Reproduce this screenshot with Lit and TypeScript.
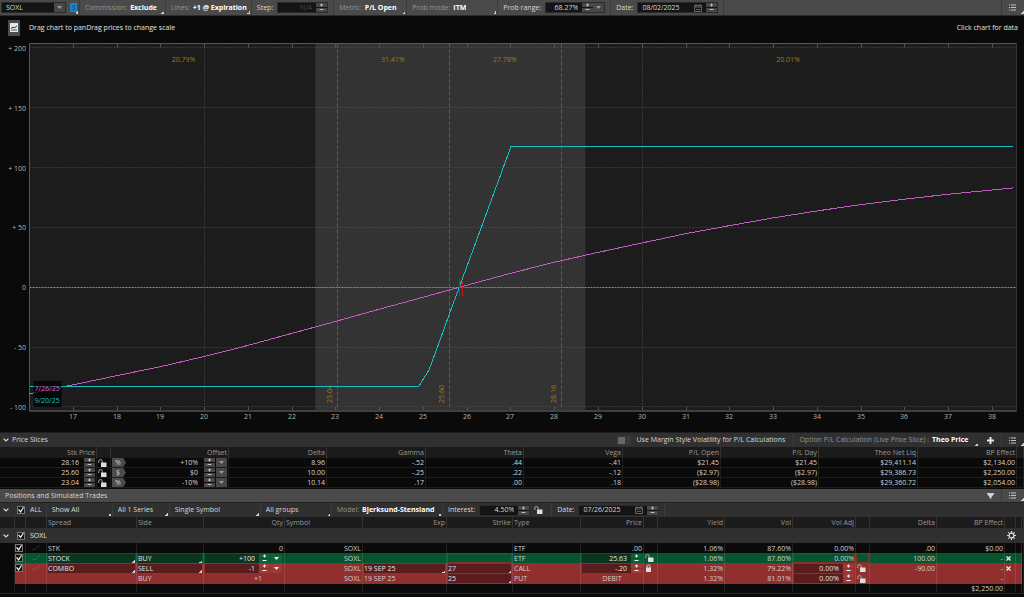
import { LitElement, html, svg, css, nothing } from "lit";
import { customElement, state } from "lit/decorators.js";

/* ---------- shared look ---------- */

const controls = css`
  *,
  *::before,
  *::after {
    box-sizing: border-box;
  }
  button,
  input,
  select {
    font: inherit;
    color: inherit;
    margin: 0;
    padding: 0;
    border: 0;
    border-radius: 0;
    background: none;
    min-width: 0;
    appearance: none;
    outline-offset: -1px;
  }
  button {
    display: flex;
    align-items: center;
    justify-content: center;
  }
  svg {
    display: block;
    flex: none;
  }
  .value {
    font-weight: 700;
    color: #fff;
  }
  .num {
    text-align: right;
  }
  .check {
    display: block;
    width: 8px;
    height: 8px;
    flex: none;
    border: 1px solid #777;
    background: #111;
  }
  .check:checked::before {
    content: "";
    display: block;
    width: 6px;
    height: 6px;
    background: #f0f0f0;
    clip-path: polygon(0 45%, 18% 35%, 42% 62%, 85% 0, 100% 8%, 45% 100%);
  }
  .stepper {
    display: flex;
    flex-direction: column;
    gap: 1px;
    width: 11px;
    flex: none;
  }
  .stepper button {
    height: 4px;
    background: #474747;
    color: #bdbdbd;
  }
  .drop {
    width: 11px;
    height: 9px;
    flex: none;
    background: #474747;
    color: #999;
  }
`;

const plus = svg`<svg width="5" height="4" viewBox="0 0 5 4"><path d="M1 2h3M2.500 0.500v3" stroke="currentColor" fill="none"/></svg>`;
const minus = svg`<svg width="5" height="4" viewBox="0 0 5 4"><path d="M0.500 1.500h4" stroke="currentColor" fill="none"/></svg>`;
const caret = svg`<svg width="5" height="3" viewBox="0 0 5 3"><path d="M0 0h5L2.500 3z" fill="currentColor"/></svg>`;
const chevron = svg`<svg width="6" height="4" viewBox="0 0 6 4"><path d="M.6.6 3 3 5.400.6" stroke="currentColor" stroke-width="1.200" fill="none"/></svg>`;
const openLock = svg`<svg width="9" height="8" viewBox="0 0 9 8"><path d="M.8 4V2.200a1.700 1.700 0 0 1 3.400 0V4" stroke="#aaa" stroke-width="1" fill="none"/><path d="M3 3.500h5.500V8H3z" fill="#ddd"/></svg>`;
const shutLock = svg`<svg width="7" height="8" viewBox="0 0 7 8"><path d="M2 4V2.300a1.500 1.500 0 0 1 3 0V4" stroke="#ddd" stroke-width="1" fill="none"/><path d="M1 3.500h5V8H1z" fill="#ddd"/></svg>`;
const listIcon = svg`<svg width="7" height="7" viewBox="0 0 7 7"><path d="M0 1h1.200M0 3.500h1.200M0 6h1.200M2 1h5M2 3.500h5M2 6h5" stroke="#c4c4c4" stroke-width="1.100"/></svg>`;
const calendar = svg`<svg width="8" height="8" viewBox="0 0 8 8"><path d="M.5 1.500h7v6h-7zM.5 3h7" stroke="#666" fill="none"/><path d="M2 0v2M6 0v2M2 5.500h4" stroke="#666"/></svg>`;
const gear = svg`<svg width="9" height="9" viewBox="0 0 9 9"><circle cx="4.500" cy="4.500" r="2.400" stroke="#ddd" stroke-width="1.200" fill="none"/><path d="M4.500 0v2M4.500 7v2M0 4.500h2M7 4.500h2M1.300 1.300l1.400 1.400M6.300 6.300l1.400 1.400M7.700 1.300 6.300 2.700M2.700 6.300 1.300 7.700" stroke="#ddd" stroke-width="1.100"/></svg>`;
const cross = svg`<svg width="5" height="5" viewBox="0 0 5 5"><path d="M.5.5l4 4M4.500.5l-4 4" stroke="#eee" stroke-width="1.200"/></svg>`;
const funnel = svg`<svg width="7" height="6" viewBox="0 0 7 6"><path d="M0 0h7v1L4.500 4v1.500h-2V4L0 1z" fill="#d0d0d0"/></svg>`;
const trend = svg`<svg width="8" height="6" viewBox="0 0 8 6"><path d="M0 5l2-1 1 1 2-3 1 0L8 0" stroke="#fff" stroke-opacity=".13" fill="none"/></svg>`;

const stepper = (name: string) => html`<span class="stepper"
  ><button aria-label="Increase ${name}">${plus}</button
  ><button aria-label="Decrease ${name}">${minus}</button></span
>`;

/* ---------- profit and loss chart ---------- */

type Point = [number, number];

const X_MIN = 16;
const X_MAX = 38.55;
const Y_MAX = 203.6;
const Y_MIN = -103.4;

const expiration: Point[] = [
  [16, -82.5], [24.9, -82.5], [25.13, -69], [25.33, -49], [25.6, -21.5],
  [25.82, 0], [27, 117.5], [38.48, 117.5],
];
const today: Point[] = [
  [16, -89], [16.5, -85], [17, -81.5], [18, -73.8], [19, -66.3], [20, -57.8],
  [21, -48.5], [22, -38.5], [23, -28.5], [24, -18.3], [25, -8.3], [25.8, -0.2],
  [26.5, 6.7], [27, 11.7], [28, 21], [29, 29.2], [30, 37], [31, 44.8], [32, 51.5],
  [33, 58], [34, 63.8], [35, 69], [36, 73.6], [37, 77.7], [38, 81.2], [38.48, 83],
];
const slices = [23.04, 25.6, 28.16];
const probabilities: [number, string][] = [
  [19.52, "20.79%"], [24.3, "31.41%"], [26.86, "27.78%"], [33.33, "20.01%"],
];

@customElement("pl-chart")
export class PlChart extends LitElement {
  @state() private w = 1024;
  @state() private h = 382;
  private watcher?: ResizeObserver;

  static styles = css`
    :host {
      display: flex;
      flex: 1;
      min-height: 260px;
      overflow: hidden;
    }
    svg {
      flex: 1;
      width: 100%;
      height: auto;
      min-width: 0;
      font-size: 7px;
    }
    .plot { fill: #1c1c1c; }
    .range { fill: #333; }
    .frame { stroke: #555; fill: none; }
    .base { stroke: #404040; stroke-width: 2; }
    .side { stroke: #333; }
    .grid { stroke: #505050; stroke-dasharray: 1 2; }
    .zero { stroke: #8a8a8a; stroke-dasharray: 2 1; }
    .slice { stroke: #7c5a14; stroke-dasharray: 4 2; }
    .amber { fill: #a87810; }
    .tick { fill: #b4b4b4; }
    .teal { stroke: #14c0c0; fill: none; shape-rendering: crispEdges; }
    .pink { stroke: #c45cc4; fill: none; shape-rendering: crispEdges; }
    .mark { stroke: #c01c1c; stroke-width: 1; }
    .box { fill: #000; fill-opacity: 0.75; }
    .pink-text { fill: #d466d4; }
    .teal-text { fill: #10c4bc; }
    .mid { text-anchor: middle; }
    .end { text-anchor: end; }
  `;

  connectedCallback() {
    super.connectedCallback();
    this.watcher = new ResizeObserver(([entry]) => {
      this.w = Math.round(entry.contentRect.width);
      this.h = Math.round(entry.contentRect.height);
    });
    this.watcher.observe(this);
  }

  disconnectedCallback() {
    this.watcher?.disconnect();
    super.disconnectedCallback();
  }

  render() {
    const left = 29.5;
    const right = this.w - 7.5;
    const top = 0.5;
    const bottom = this.h - 14;
    const x = (v: number) => left + ((v - X_MIN) / (X_MAX - X_MIN)) * (right - left);
    const y = (v: number) => top + ((Y_MAX - v) / (Y_MAX - Y_MIN)) * (bottom - top);
    const snap = (n: number) => Math.floor(n) + 0.5;
    const path = (pts: Point[]) => pts.map(([a, b]) => `${x(a).toFixed(1)},${y(b).toFixed(1)}`).join(" ");
    const prices = Array.from({ length: 22 }, (_, i) => i + 17);
    const levels = [200, 150, 100, 50, 0, -50, -100];
    const level = (v: number) => (v > 0 ? `+ ${v}` : v < 0 ? `- ${-v}` : "0");
    const foot = Math.round(y(-82.5));

    return html`<svg role="img" aria-label="Profit and loss by price">
      <rect class="plot" x=${left} y=${top} width=${right - left} height=${bottom - top}></rect>
      <rect class="range" x=${x(22.53)} y=${top} width=${x(28.7) - x(22.53)} height=${bottom - top}></rect>
      ${levels.map((v) => svg`
        <line class=${v === 0 ? "zero" : "grid"} x1=${left} x2=${right} y1=${snap(y(v))} y2=${snap(y(v))} />
        <text class="tick end" x="26" y=${Math.round(y(v)) + 3}>${level(v)}</text>`)}
      ${[20, 30].map((v) => svg`<line class="grid" x1=${snap(x(v))} x2=${snap(x(v))} y1=${top} y2=${bottom} />`)}
      ${prices.map((v) => svg`
        <path class="frame" d=${`M${snap(x(v))} ${top}v4M${snap(x(v))} ${bottom}v-4`} />
        <text class="tick mid" x=${Math.floor(x(v))} y=${bottom + 8}>${v}</text>`)}
      ${slices.map((v) => svg`
        <line class="slice" x1=${snap(x(v))} x2=${snap(x(v))} y1=${top} y2=${bottom} />
        <text class="amber mid" transform=${`translate(${snap(x(v)) - 6} ${foot + 8}) rotate(-90)`}>${v.toFixed(2)}</text>`)}
      ${probabilities.map(([v, label]) => svg`<text class="amber mid" x=${x(v)} y="19">${label}</text>`)}
      <path class="frame" d=${`M${left} ${bottom}V${top}H${right}`}></path>
      <line class="side" x1=${right} x2=${right} y1=${top} y2=${bottom}></line>
      <line class="base" x1=${left} x2=${right} y1=${bottom} y2=${bottom}></line>
      <polyline class="pink" points=${path(today)}></polyline>
      <polyline class="teal" points=${path(expiration)}></polyline>
      <path class="mark" d=${`M${snap(x(25.83))} ${y(7)}v17M${snap(x(25.89))} ${y(5)}v15`}></path>
      <rect class="box" x=${left + 4} y=${foot - 5} width="28" height="26"></rect>
      <text class="pink-text" x=${left + 5} y=${foot + 5}>7/26/25</text>
      <text class="teal-text" x=${left + 5} y=${foot + 17}>9/20/25</text>
    </svg>`;
  }
}

/* ---------- price slices ---------- */

const sliceColumns: [string, number][] = [
  ["Stk Price", 97], ["", 14], ["Offset", 118], ["Delta", 98], ["Gamma", 99], ["Theta", 98],
  ["Vega", 99], ["P/L Open", 98], ["P/L Day", 98], ["Theo Net Liq", 99], ["BP Effect", 99], ["", 7],
];
const sliceRows = [
  { price: "28.16", unit: "%", offset: "+10%", cells: ["8.96", "-.52", ".44", "-.41", "$21.45", "$21.45", "$29,411.14", "$2,134.00"] },
  { price: "25.60", unit: "$", offset: "$0", cells: ["10.00", "-.25", ".22", "-.12", "($2.97)", "($2.97)", "$29,386.73", "$2,250.00"] },
  { price: "23.04", unit: "%", offset: "-10%", cells: ["10.14", ".17", ".00", ".18", "($28.98)", "($28.98)", "$29,360.72", "$2,054.00"] },
];

const tables = css`
  table {
    width: 100%;
    table-layout: fixed;
    border-collapse: separate;
    border-spacing: 0;
  }
  th,
  td {
    padding: 0 1px 0 1px;
    border-right: 1px solid #1e1e1e;
    font-weight: 400;
    line-height: 9px;
    height: 10px;
    white-space: nowrap;
    overflow: hidden;
    text-align: left;
  }
  th {
    height: 11px;
    background: #1b1b1b;
    color: #989898;
    border-right-color: #333;
  }
  .r {
    text-align: right;
  }
  .c {
    text-align: center;
  }
  .line {
    display: flex;
    align-items: center;
    justify-content: flex-end;
    height: 9px;
  }
`;

@customElement("price-slices")
export class PriceSlices extends LitElement {
  static styles = [
    controls,
    tables,
    css`
      :host {
        display: block;
        padding-bottom: 1px;
      }
      td {
        color: #d4d4d4;
        border-bottom: 1px solid #1c1c1c;
      }
      .price {
        width: 40px;
        margin-right: 5px;
      }
      .tag {
        width: 14px;
        height: 9px;
        background: #4c4c4c;
        color: #d0d0d0;
        line-height: 9px;
        clip-path: polygon(0 0, 80% 0, 100% 50%, 80% 100%, 0 100%);
        padding-right: 2px;
      }
      .offset {
        flex: 1;
        margin-right: 6px;
      }
      .drop {
        margin-left: 1px;
      }
    `,
  ];

  render() {
    return html`<table>
      <colgroup>${sliceColumns.map(([, w]) => html`<col style="width:${w}px" />`)}</colgroup>
      <thead><tr>${sliceColumns.map(([t]) => html`<th class="r">${t}</th>`)}</tr></thead>
      <tbody>
        ${sliceRows.map((row) => html`<tr>
          <td><div class="line"><input class="num price" aria-label="Stock price" .value=${row.price} />${stepper("price")}</div></td>
          <td><button aria-label="Lock price">${openLock}</button></td>
          <td><div class="line"><button class="tag" aria-label="Offset unit">${row.unit}</button
            ><input class="num offset" aria-label="Offset" .value=${row.offset} />${stepper("offset")}<button class="drop" aria-label="Offset choices">${caret}</button></div></td>
          ${row.cells.map((c) => html`<td class="r">${c}</td>`)}
          <td></td>
        </tr>`)}
      </tbody>
    </table>`;
  }
}

/* ---------- positions ---------- */

const positionColumns: [string, number, string][] = [
  ["", 15, ""], ["", 11, ""], ["", 21, ""], ["Spread", 90, ""], ["Side", 67, ""], ["Qty", 81, "r"],
  ["Symbol", 78, ""], ["Exp", 84, "r"], ["Strike", 66, "r"], ["Type", 68, ""], ["Price", 63, "r"],
  ["", 14, ""], ["Yield", 67, "r"], ["Vol", 68, "r"], ["Vol Adj", 63, "r"], ["", 14, ""],
  ["Delta", 67, "r"], ["BP Effect", 68, "r"], ["", 11, ""], ["", 6, ""], ["", 2, ""],
];

@customElement("positions-table")
export class PositionsTable extends LitElement {
  static styles = [
    controls,
    tables,
    css`
      :host {
        display: block;
        padding-bottom: 3px;
      }
      td {
        color: #d0d0d0;
        border-right-color: rgba(255, 255, 255, 0.1);
      }
      td:first-child,
      td:last-child {
        background: #0a0a0a;
        border-right-color: #1e1e1e;
      }
      .group td {
        height: 15px;
        background: #303030;
        border: 0;
        padding: 0;
        overflow: visible;
        color: #e0e0e0;
      }
      .group .bar {
        display: flex;
        align-items: center;
        padding: 0 8px 0 3px;
        height: 15px;
      }
      .toggle {
        width: 6px;
        margin-right: 8px;
      }
      .name {
        display: flex;
        align-items: center;
        gap: 5px;
        flex: 1;
      }
      .pick {
        padding: 0;
      }
      .buy td {
        background: #07552f;
      }
      .sell td {
        background: #912e2e;
      }
      .buy td:first-child,
      .buy td:last-child,
      .sell td:first-child,
      .sell td:last-child {
        background: #0a0a0a;
      }
      .leg td {
        height: 11px;
      }
      .total td {
        border-bottom: 1px solid #2a2a2a;
      }
      .buy .field {
        background-color: #0b3520;
      }
      .sell .field {
        background-color: #5a1c1c;
      }
      .field {
        display: block;
        width: 100%;
        height: 9px;
        line-height: 9px;
        color: #e4e4e4;
      }
      select.field {
        background-image: linear-gradient(135deg, transparent 50%, #ccc 50%);
        background-size: 3px 3px;
        background-position: right bottom;
        background-repeat: no-repeat;
      }
      .outlined {
        box-shadow: inset 0 0 0 1px #7a3327;
      }
      .line .field {
        flex: 1;
        padding-right: 4px;
      }
      .buy .stepper button,
      .buy .drop {
        background: #0c6338;
        color: #f0f0f0;
      }
      .sell .stepper button,
      .sell .drop {
        background: #a03a3a;
        color: #f0f0f0;
      }
      .line .drop {
        margin: 0 1px;
      }
      .center {
        justify-content: center;
      }
      .off {
        padding-right: 22px;
      }
    `,
  ];

  private pick(name: string, value: string) {
    return html`<select class="field" aria-label=${name}><option>${value}</option></select>`;
  }

  private number(name: string, value: string, drop = false) {
    return html`<div class="line">
      <input class="field num" aria-label=${name} .value=${value} />${stepper(name)}
      ${drop ? html`<button class="drop" aria-label="${name} choices">${caret}</button>` : nothing}
    </div>`;
  }

  private lead(name: string) {
    return html`<td></td>
      <td class="pick"><input class="check" type="checkbox" aria-label=${name} checked /></td>
      <td><div class="line center">${trend}</div></td>`;
  }

  render() {
    const close = html`<td><button aria-label="Remove">${cross}</button></td>`;
    const blank = html`<td></td>`;
    return html`<table>
      <colgroup>${positionColumns.map(([, w]) => html`<col style="width:${w}px" />`)}</colgroup>
      <thead><tr>${positionColumns.map(([t, , a]) => html`<th class=${a}>${t}</th>`)}</tr></thead>
      <tbody>
        <tr class="group"><td colspan="21"><div class="bar">
          <button class="toggle" aria-label="Collapse SOXL">${chevron}</button>
          <label class="name"><input class="check" type="checkbox" checked />SOXL</label>
          <button aria-label="Group settings">${gear}</button>
        </div></td></tr>
        <tr>
          ${this.lead("Include STK")}
          <td>STK</td>${blank}<td class="r">0</td><td class="r">SOXL</td>${blank}${blank}<td>ETF</td><td class="r">.00</td>${blank}
          <td class="r">1.06%</td><td class="r">87.60%</td><td class="r">0.00%</td>${blank}<td class="r">.00</td><td class="r">$0.00</td>${blank}${blank}${blank}
        </tr>
        <tr class="buy">
          ${this.lead("Include STOCK")}
          <td>${this.pick("Spread", "STOCK")}</td><td>${this.pick("Side", "BUY")}</td>
          <td>${this.number("quantity", "+100", true)}</td><td class="r">SOXL</td>${blank}
          <td class="outlined"></td><td>ETF</td><td>${this.number("price", "25.63")}</td>
          <td><button aria-label="Lock price">${openLock}</button></td>
          <td class="r">1.06%</td><td class="r">87.60%</td><td class="r outlined">0.00%</td><td class="outlined"></td>
          <td class="r">100.00</td><td class="r">-</td>${close}${blank}${blank}
        </tr>
        <tr class="sell">
          ${this.lead("Include COMBO")}
          <td>${this.pick("Spread", "COMBO")}</td><td>${this.pick("Side", "SELL")}</td>
          <td>${this.number("quantity", "-1", true)}</td><td class="r">SOXL</td><td>${this.pick("Expiration", "19 SEP 25")}</td>
          <td>${this.pick("Strike", "27")}</td><td>CALL</td><td>${this.number("price", "-.20")}</td>
          <td><button aria-label="Unlock price">${shutLock}</button></td>
          <td class="r">1.32%</td><td class="r">79.22%</td><td>${this.number("volatility", "0.00%")}</td>
          <td><button aria-label="Lock volatility">${openLock}</button></td>
          <td class="r">-90.00</td><td class="r">-</td>${close}${blank}${blank}
        </tr>
        <tr class="sell leg">
          <td></td>${blank}${blank}${blank}<td>BUY</td><td class="r off">+1</td><td class="r">SOXL</td><td>19 SEP 25</td>
          <td>${this.pick("Strike", "25")}</td><td>PUT</td><td class="c">DEBIT</td>${blank}
          <td class="r">1.32%</td><td class="r">81.01%</td><td>${this.number("volatility", "0.00%")}</td>
          <td><button aria-label="Lock volatility">${openLock}</button></td>
          ${blank}<td class="r">-</td>${blank}${blank}${blank}
        </tr>
        <tr class="total">
          ${Array.from({ length: 17 }, () => html`<td></td>`)}<td class="r">$2,250.00</td>${blank}${blank}${blank}
        </tr>
      </tbody>
    </table>`;
  }
}

/* ---------- page ---------- */

@customElement("app-root")
export class AppRoot extends LitElement {
  static styles = [
    controls,
    css`
      :host {
        display: flex;
        flex-direction: column;
        min-height: 100vh;
        background: #0a0a0a;
        color: #d8d8d8;
        font-family: "Open Sans", "Noto Sans", sans-serif;
        font-size: 7px;
        line-height: 10px;
      }
      .bar {
        display: flex;
        align-items: center;
        height: 14px;
        background: #303030;
        flex: none;
      }
      .tools {
        height: 16px;
        background: #4a4a4a;
        border-bottom: 1px solid #2c2c2c;
      }
      .title {
        background: #4a4a4a;
        border-bottom: 1px solid #222;
      }
      .cell {
        display: flex;
        align-items: center;
        align-self: stretch;
        gap: 4px;
        padding: 0 5px;
        border-right: 1px solid #3b3b3b;
        white-space: nowrap;
      }
      .menu {
        gap: 3px;
        padding-right: 7px;
        background: linear-gradient(135deg, transparent 50%, #ccc 50%) no-repeat right 1px bottom 1px / 3px 3px;
      }
      .symbol {
        padding: 0 4px 0 1px;
      }
      .group {
        padding: 0 2px 0 0;
      }
      .tight {
        padding-right: 4px;
      }
      .bare {
        border: 0;
      }
      .calc {
        border: 0;
        padding-right: 10px;
      }
      .dim {
        color: #949494;
      }
      .box {
        display: flex;
        align-items: center;
        height: 11px;
        background: #141414;
        border: 1px solid #2a2a2a;
      }
      .box input {
        width: 38px;
        padding: 0 4px;
      }
      .box .ticker {
        width: 52px;
      }
      .box .range {
        width: 36px;
      }
      .box .date {
        width: 56px;
      }
      .box svg {
        margin-right: 4px;
      }
      .box button svg {
        margin: 0;
      }
      .off {
        color: #484848;
      }
      .fill {
        flex: 1;
      }
      .link {
        width: 7px;
        height: 9px;
        background: #1a86c0;
        color: #0c3e60;
        line-height: 9px;
      }
      .corner {
        align-self: stretch;
        width: 23px;
        padding-right: 1px;
        border-left: 1px solid #3b3b3b;
        background: linear-gradient(135deg, transparent 50%, #ccc 50%) no-repeat right bottom 1px / 3px 3px;
      }
      .square {
        width: 22px;
      }
      .hint {
        display: flex;
        align-items: center;
        justify-content: space-between;
        padding: 0 6px 4px 8px;
        height: 27px;
        color: #e4e4e4;
      }
      .hint div {
        display: flex;
        align-items: center;
        gap: 9px;
      }
      .gap {
        height: 8px;
        border-bottom: 1px solid #1e1e1e;
        flex: none;
      }
      .w66 {
        min-width: 66px;
      }
      .w57 {
        min-width: 57px;
      }
      .w73 {
        min-width: 73px;
      }
      .w86 {
        min-width: 86px;
      }
      .w91 {
        min-width: 91px;
      }
      .w71 {
        min-width: 71px;
      }
      .all {
        display: flex;
        align-items: center;
        gap: 5px;
      }
      .first {
        padding: 0 4px 0 3px;
        gap: 8px;
      }
      .rate {
        padding-right: 8px;
      }
      .heading {
        padding-left: 3px;
        gap: 3px;
      }
      .switch {
        width: 14px;
        height: 9px;
        background: #3a3a3a;
      }
      .switch::before {
        content: "";
        display: block;
        width: 7px;
        height: 7px;
        margin: 1px;
        background: #666;
      }
      .tick {
        gap: 6px;
        padding-right: 8px;
      }
    `,
  ];

  private menu(label: string, value: string, extra = "") {
    return html`<label class="cell menu ${extra}">
      ${label ? html`<span class="dim">${label}</span>` : nothing}
      <select class=${label ? "value" : ""} aria-label=${label || value}><option>${value}</option></select>
    </label>`;
  }

  render() {
    return html`
      <div class="bar tools">
        <div class="cell bare symbol">
          <div class="box"><input class="ticker" aria-label="Symbol" .value=${"SOXL"} /><button class="drop" aria-label="Symbol choices">${caret}</button></div>
        </div>
        <div class="cell menu group"><button class="link" aria-label="Link group">3</button></div>
        ${this.menu("Commission:", "Exclude", "w86")} ${this.menu("Lines:", "+1 @ Expiration", "tight")}
        <div class="cell"><label for="step">Step:</label>
          <div class="box"><input id="step" class="num off" .value=${"N/A"} />${stepper("step")}</div></div>
        ${this.menu("Metric:", "P/L Open", "w73")} ${this.menu("Prob mode:", "ITM", "w91")}
        <div class="cell"><label for="range">Prob range:</label>
          <div class="box"><input id="range" class="num range" .value=${"68.27%"} />${stepper("range")}<button class="drop" aria-label="Range choices">${caret}</button></div></div>
        <div class="cell"><label for="date">Date:</label>
          <div class="box"><input id="date" class="date" .value=${"08/02/2025"} />${calendar}${stepper("date")}</div></div>
        <span class="fill"></span>
        <button class="corner" aria-label="Chart menu">${listIcon}</button>
      </div>

      <div class="hint">
        <div>
          <svg width="12" height="16" viewBox="0 0 12 16"><path d="M0 0h12v16H0z" fill="#4c4c4c"/><path d="M2 3h8v9H2z" fill="#e8e8e8"/><path d="M3 8.500 5 7l1 1 3-2" stroke="#333" fill="none"/><path d="M3 10h6" stroke="#555"/></svg>
          <span>Drag chart to panDrag prices to change scale</span>
        </div>
        <span>Click chart for data</span>
      </div>

      <pl-chart></pl-chart>
      <div class="gap"></div>

      <div class="bar">
        <div class="cell bare heading"><button aria-label="Collapse price slices">${chevron}</button><span>Price Slices</span></div>
        <span class="fill"></span>
        <label class="cell tick"><input class="switch" type="checkbox" />Use Margin Style Volatility for P/L Calculations</label>
        ${this.menu("Option P/L Calculation (Live Price Slice) :", "Theo Price", "calc")}
        <button class="square" aria-label="Add slice"><svg width="7" height="7" viewBox="0 0 7 7"><path d="M3.500 0v7M0 3.500h7" stroke="#e4e4e4" stroke-width="2"/></svg></button>
        <button class="corner" aria-label="Slices menu">${listIcon}</button>
      </div>
      <price-slices></price-slices>

      <div class="bar title">
        <div class="cell bare">Positions and Simulated Trades</div>
        <span class="fill"></span>
        <button class="square" aria-label="Filter">${funnel}</button>
        <button class="corner" aria-label="Positions menu">${listIcon}</button>
      </div>
      <div class="bar">
        <div class="cell first"><button aria-label="Collapse all">${chevron}</button>
          <label class="all"><input class="check" type="checkbox" checked />ALL</label></div>
        ${this.menu("", "Show All", "w66")} ${this.menu("", "All 1 Series", "w57 tight")} ${this.menu("", "Single Symbol", "w91")}
        ${this.menu("", "All groups", "w71")} ${this.menu("Model:", "Bjerksund-Stensland")}
        <div class="cell rate"><label for="interest">Interest:</label>
          <div class="box"><input id="interest" class="num" .value=${"4.50%"} />${stepper("interest")}</div>
          <button aria-label="Lock interest">${openLock}</button></div>
        <div class="cell"><label for="asof">Date:</label>
          <div class="box"><input id="asof" class="date" .value=${"07/26/2025"} />${calendar}${stepper("date")}</div></div>
      </div>
      <positions-table></positions-table>
    `;
  }
}
